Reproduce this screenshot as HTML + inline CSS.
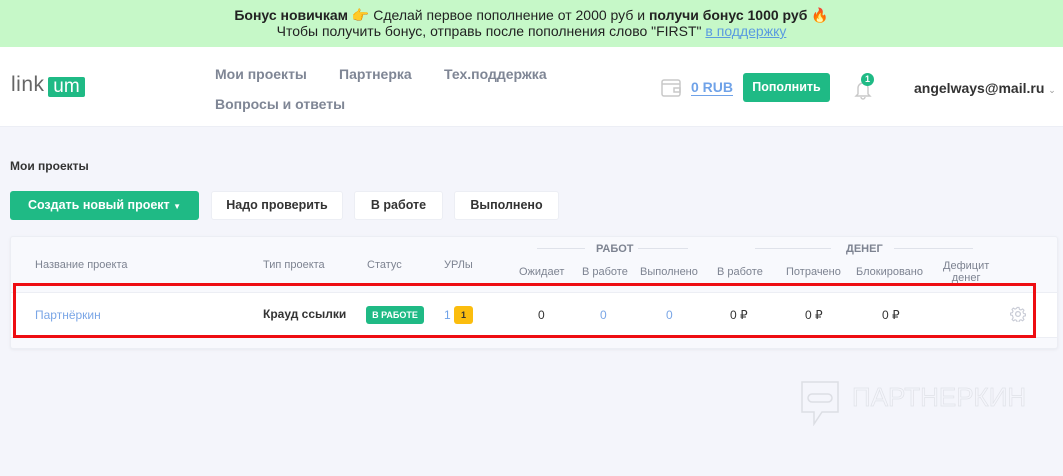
<!DOCTYPE html>
<html><head><meta charset="utf-8">
<style>
*{margin:0;padding:0;box-sizing:border-box}
body{width:1063px;height:476px;overflow:hidden;background:#f4f5fb;font-family:"Liberation Sans","DejaVu Sans",sans-serif;position:relative;color:#333}
.a{position:absolute;white-space:nowrap}
.banner{left:0;top:0;width:1063px;height:47px;background:#c6f8c8;text-align:center;font-size:14px;color:#222;line-height:16px;padding-top:7px}
.banner a{color:#5a9be0;text-decoration:underline}
.header{left:0;top:47px;width:1063px;height:80px;background:#fff;border-bottom:1px solid #eceef5}
.nav{font-size:14px;font-weight:bold;color:#7f8695}
.btn{border-radius:3px;font-size:12.5px;font-weight:bold;text-align:center}
.th{font-size:11px;color:#7d8391}
.card{left:10px;top:236px;width:1048px;height:113px;background:#f8f9fd;border:1px solid #eceef4;border-radius:3px;box-shadow:0 1px 3px rgba(0,0,0,.05)}
.row{left:11px;top:292px;width:1046px;height:46px;background:#fff;border-top:1px solid #eceef4;border-bottom:1px solid #eceef4}
.td{font-size:12px;color:#333;top:308px}
.line{height:1px;background:#dfe2ea;top:248px}
</style></head><body>
<div class="a banner"><b>Бонус новичкам</b> 👉 Сделай первое пополнение от 2000 руб и <b>получи бонус 1000 руб</b> 🔥<br>Чтобы получить бонус, отправь после пополнения слово "FIRST" <a>в поддержку</a></div>
<div class="a header"></div>
<div class="a" style="left:11px;top:73px;font-size:21px;color:#666;letter-spacing:0.5px">link</div>
<div class="a" style="left:48px;top:77px;width:37px;height:20px;background:#1fba85;border-radius:2px;color:#fff;font-size:19px;line-height:19px;text-align:center">um</div>
<div class="a nav" style="left:215px;top:66px">Мои проекты</div>
<div class="a nav" style="left:339px;top:66px">Партнерка</div>
<div class="a nav" style="left:444px;top:66px">Тех.поддержка</div>
<div class="a nav" style="left:215px;top:96px">Вопросы и ответы</div>
<svg class="a" style="left:661px;top:79px" width="20" height="18" viewBox="0 0 20 18"><rect x="1" y="1" width="18" height="16" rx="2" fill="none" stroke="#c8c8c8" stroke-width="1.5"/><path d="M1 5h18M13 9h6v4h-6z" fill="none" stroke="#c8c8c8" stroke-width="1.5"/></svg>
<div class="a" style="left:691px;top:80px;font-size:14px;font-weight:bold;color:#6fa2e8;border-bottom:1px solid #6fa2e8;line-height:15px">0 RUB</div>
<div class="a btn" style="left:743px;top:73px;width:87px;height:29px;background:#1fba85;color:#fff;line-height:29px">Пополнить</div>
<svg class="a" style="left:853px;top:78px" width="20" height="22" viewBox="0 0 20 22"><path d="M5 16V10a5 5 0 0 1 10 0v6l2 2H3z M8 19a2 2 0 0 0 4 0" fill="none" stroke="#c8c8c8" stroke-width="1.4"/></svg>
<div class="a" style="left:861px;top:73px;width:13px;height:13px;border-radius:50%;background:#1fba85;color:#fff;font-size:9px;font-weight:bold;text-align:center;line-height:13px">1</div>
<div class="a" style="left:914px;top:80px;font-size:14px;font-weight:bold;color:#333">angelways@mail.ru <span style="font-size:9px;color:#999;font-weight:normal">&#8964;</span></div>

<div class="a" style="left:10px;top:159px;font-size:12px;font-weight:bold;color:#333">Мои проекты</div>
<div class="a btn" style="left:10px;top:191px;width:189px;height:29px;background:#1fba85;color:#fff;line-height:29px">Создать новый проект <span style="font-size:8px">▼</span></div>
<div class="a btn" style="left:211px;top:191px;width:132px;height:29px;background:#fff;border:1px solid #eceef4;line-height:27px;color:#333">Надо проверить</div>
<div class="a btn" style="left:354px;top:191px;width:89px;height:29px;background:#fff;border:1px solid #eceef4;line-height:27px;color:#333">В работе</div>
<div class="a btn" style="left:454px;top:191px;width:105px;height:29px;background:#fff;border:1px solid #eceef4;line-height:27px;color:#333">Выполнено</div>

<div class="a card"></div>
<div class="a line" style="left:537px;width:48px"></div>
<div class="a th" style="left:596px;top:243px;font-weight:bold">РАБОТ</div>
<div class="a line" style="left:638px;width:50px"></div>
<div class="a line" style="left:755px;width:76px"></div>
<div class="a th" style="left:846px;top:243px;font-weight:bold">ДЕНЕГ</div>
<div class="a line" style="left:894px;width:79px"></div>
<div class="a th" style="left:35px;top:259px">Название проекта</div>
<div class="a th" style="left:263px;top:259px">Тип проекта</div>
<div class="a th" style="left:367px;top:259px">Статус</div>
<div class="a th" style="left:444px;top:259px">УРЛы</div>
<div class="a th" style="left:519px;top:266px">Ожидает</div>
<div class="a th" style="left:582px;top:266px">В работе</div>
<div class="a th" style="left:640px;top:266px">Выполнено</div>
<div class="a th" style="left:717px;top:266px">В работе</div>
<div class="a th" style="left:786px;top:266px">Потрачено</div>
<div class="a th" style="left:856px;top:266px">Блокировано</div>
<div class="a th" style="left:943px;top:260px;text-align:center;line-height:12px">Дефицит<br>денег</div>
<div class="a row"></div>
<div class="a td" style="left:35px;color:#7aa6e6">Партнёркин</div>
<div class="a td" style="left:263px;font-weight:bold;font-size:12px;top:307px">Крауд ссылки</div>
<div class="a" style="left:366px;top:306px;width:58px;height:18px;background:#1fba85;border-radius:3px;color:#fff;font-size:9px;font-weight:bold;text-align:center;line-height:18px">В РАБОТЕ</div>
<div class="a td" style="left:444px;color:#6fa2e8">1</div>
<div class="a" style="left:454px;top:306px;width:19px;height:18px;background:#fbbd0e;border-radius:3px;font-size:9px;font-weight:bold;text-align:center;line-height:18px;color:#333">1</div>
<div class="a td" style="left:538px">0</div>
<div class="a td" style="left:600px;color:#7aa6e6">0</div>
<div class="a td" style="left:666px;color:#7aa6e6">0</div>
<div class="a td" style="left:730px">0 ₽</div>
<div class="a td" style="left:805px">0 ₽</div>
<div class="a td" style="left:882px">0 ₽</div>
<svg class="a" style="left:1010px;top:306px" width="16" height="16" viewBox="0 0 16 16"><path d="M7 1h2l.5 2 1.6.7 1.8-1.1 1.4 1.4-1.1 1.8.7 1.6 2 .5v2l-2 .5-.7 1.6 1.1 1.8-1.4 1.4-1.8-1.1-1.6.7-.5 2H7l-.5-2-1.6-.7-1.8 1.1-1.4-1.4 1.1-1.8L2.1 9.5 0 9V7l2-.5.7-1.6-1.1-1.8L3 1.7l1.8 1.1L6.5 2z" fill="none" stroke="#c9ccd6" stroke-width="1.2" transform="translate(0.5 0.5) scale(0.94)"/><circle cx="8" cy="8" r="2.4" fill="none" stroke="#c9ccd6" stroke-width="1.3"/></svg>
<div class="a" style="left:13px;top:283px;width:1023px;height:55px;border:3px solid #ee0d12"></div>

<svg class="a" style="left:800px;top:380px" width="40" height="46" viewBox="0 0 40 46"><path d="M2 2h36v30H22l-8 12v-12H2z" fill="none" stroke="#dcdee4" stroke-width="1.5"/><rect x="8" y="14" width="24" height="8" rx="4" fill="none" stroke="#dcdee4" stroke-width="1.5"/></svg>
<div class="a" style="left:852px;top:382px;font-size:26px;color:#f4f5fb;-webkit-text-stroke:0.7px #e0e2e8">ПАРТНЕРКИН</div>
</body></html>
